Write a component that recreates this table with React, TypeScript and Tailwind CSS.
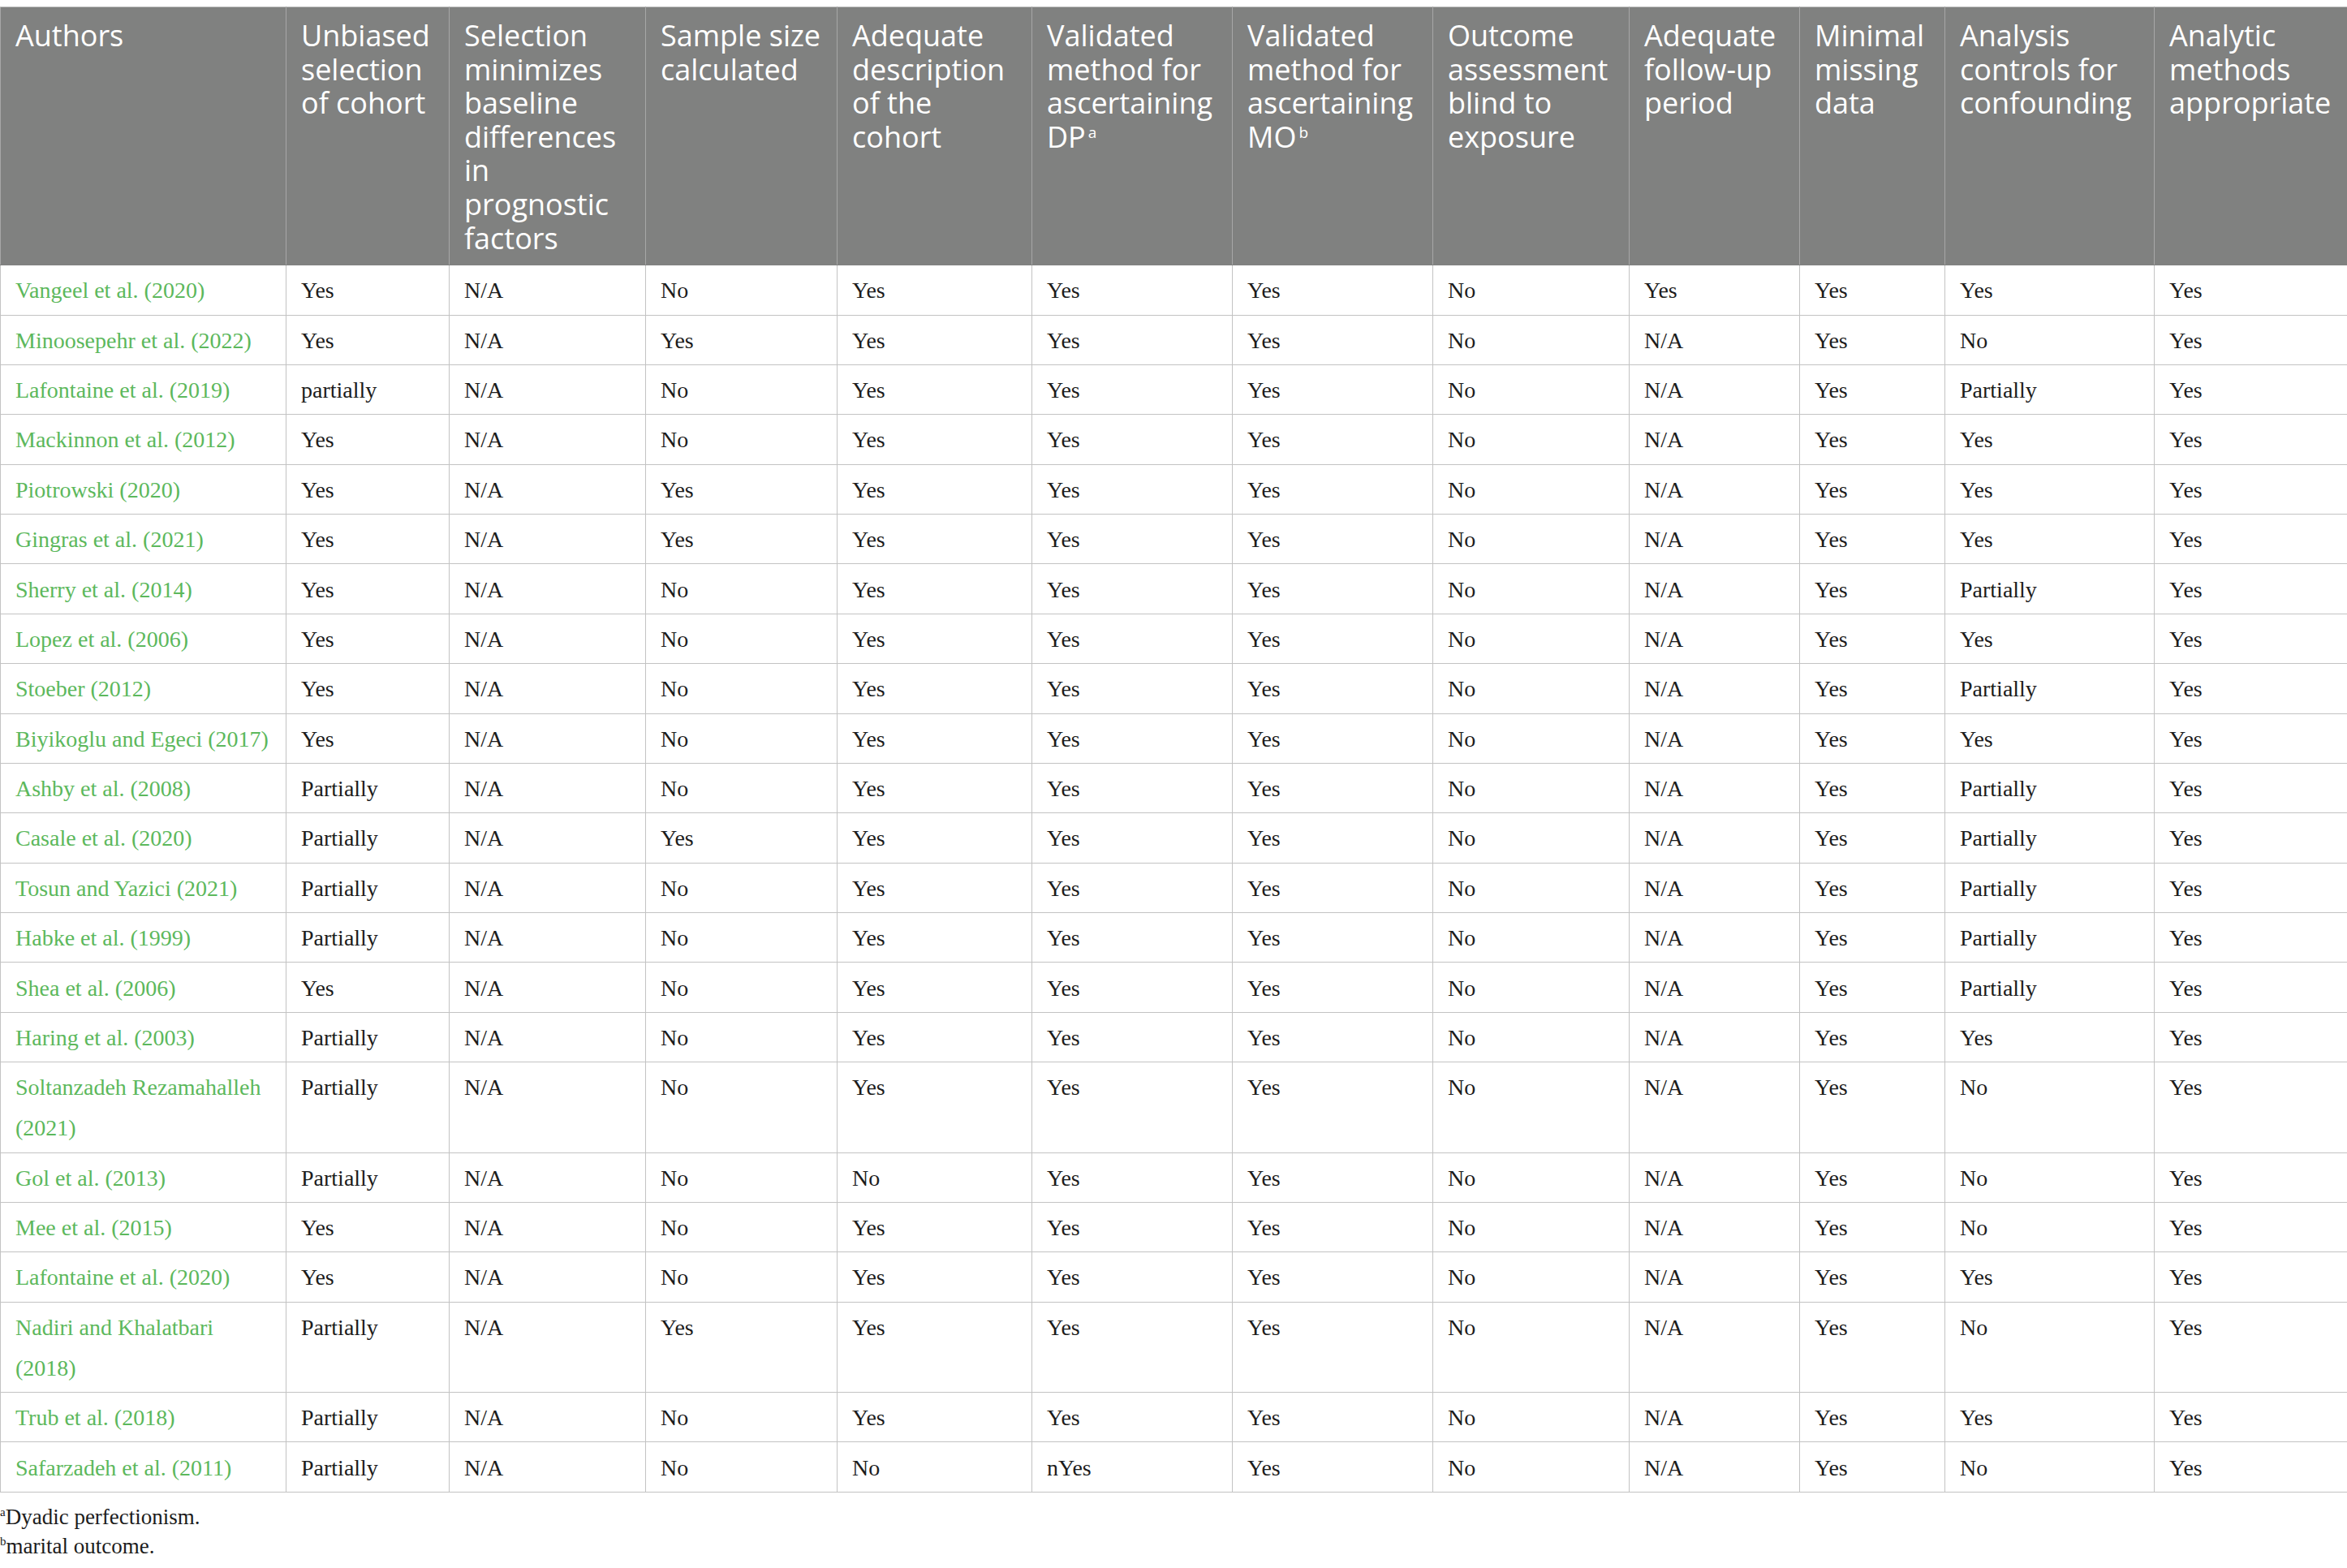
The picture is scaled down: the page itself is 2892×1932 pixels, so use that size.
import React from 'react';

type Row = { author: React.ReactNode; cells: string[] };

const headers: React.ReactNode[] = [
    'Authors',
    'Unbiased selection of cohort',
    'Selection minimizes baseline differences in prognostic factors',
    'Sample size calculated',
    'Adequate description of the cohort',
    <>Validated method for ascertaining DP<span className="ml-[3px] text-[19px] align-[12px] leading-none">a</span></>,
    <>Validated method for ascertaining MO<span className="ml-[3px] text-[19px] align-[12px] leading-none">b</span></>,
    'Outcome assessment blind to exposure',
    'Adequate follow-up period',
    'Minimal missing data',
    'Analysis controls for confounding',
    'Analytic methods appropriate',
];

const widths = [352, 201, 242, 236, 240, 247, 247, 242, 210, 179, 258, 238];

const rows: Row[] = [
    { author: 'Vangeel et al. (2020)', cells: ['Yes', 'N/A', 'No', 'Yes', 'Yes', 'Yes', 'No', 'Yes', 'Yes', 'Yes', 'Yes'] },
    { author: 'Minoosepehr et al. (2022)', cells: ['Yes', 'N/A', 'Yes', 'Yes', 'Yes', 'Yes', 'No', 'N/A', 'Yes', 'No', 'Yes'] },
    { author: 'Lafontaine et al. (2019)', cells: ['partially', 'N/A', 'No', 'Yes', 'Yes', 'Yes', 'No', 'N/A', 'Yes', 'Partially', 'Yes'] },
    { author: 'Mackinnon et al. (2012)', cells: ['Yes', 'N/A', 'No', 'Yes', 'Yes', 'Yes', 'No', 'N/A', 'Yes', 'Yes', 'Yes'] },
    { author: 'Piotrowski (2020)', cells: ['Yes', 'N/A', 'Yes', 'Yes', 'Yes', 'Yes', 'No', 'N/A', 'Yes', 'Yes', 'Yes'] },
    { author: 'Gingras et al. (2021)', cells: ['Yes', 'N/A', 'Yes', 'Yes', 'Yes', 'Yes', 'No', 'N/A', 'Yes', 'Yes', 'Yes'] },
    { author: 'Sherry et al. (2014)', cells: ['Yes', 'N/A', 'No', 'Yes', 'Yes', 'Yes', 'No', 'N/A', 'Yes', 'Partially', 'Yes'] },
    { author: 'Lopez et al. (2006)', cells: ['Yes', 'N/A', 'No', 'Yes', 'Yes', 'Yes', 'No', 'N/A', 'Yes', 'Yes', 'Yes'] },
    { author: 'Stoeber (2012)', cells: ['Yes', 'N/A', 'No', 'Yes', 'Yes', 'Yes', 'No', 'N/A', 'Yes', 'Partially', 'Yes'] },
    { author: 'Biyikoglu and Egeci (2017)', cells: ['Yes', 'N/A', 'No', 'Yes', 'Yes', 'Yes', 'No', 'N/A', 'Yes', 'Yes', 'Yes'] },
    { author: 'Ashby et al. (2008)', cells: ['Partially', 'N/A', 'No', 'Yes', 'Yes', 'Yes', 'No', 'N/A', 'Yes', 'Partially', 'Yes'] },
    { author: 'Casale et al. (2020)', cells: ['Partially', 'N/A', 'Yes', 'Yes', 'Yes', 'Yes', 'No', 'N/A', 'Yes', 'Partially', 'Yes'] },
    { author: 'Tosun and Yazici (2021)', cells: ['Partially', 'N/A', 'No', 'Yes', 'Yes', 'Yes', 'No', 'N/A', 'Yes', 'Partially', 'Yes'] },
    { author: 'Habke et al. (1999)', cells: ['Partially', 'N/A', 'No', 'Yes', 'Yes', 'Yes', 'No', 'N/A', 'Yes', 'Partially', 'Yes'] },
    { author: 'Shea et al. (2006)', cells: ['Yes', 'N/A', 'No', 'Yes', 'Yes', 'Yes', 'No', 'N/A', 'Yes', 'Partially', 'Yes'] },
    { author: 'Haring et al. (2003)', cells: ['Partially', 'N/A', 'No', 'Yes', 'Yes', 'Yes', 'No', 'N/A', 'Yes', 'Yes', 'Yes'] },
    { author: <>Soltanzadeh Rezamahalleh<br />(2021)</>, cells: ['Partially', 'N/A', 'No', 'Yes', 'Yes', 'Yes', 'No', 'N/A', 'Yes', 'No', 'Yes'] },
    { author: 'Gol et al. (2013)', cells: ['Partially', 'N/A', 'No', 'No', 'Yes', 'Yes', 'No', 'N/A', 'Yes', 'No', 'Yes'] },
    { author: 'Mee et al. (2015)', cells: ['Yes', 'N/A', 'No', 'Yes', 'Yes', 'Yes', 'No', 'N/A', 'Yes', 'No', 'Yes'] },
    { author: 'Lafontaine et al. (2020)', cells: ['Yes', 'N/A', 'No', 'Yes', 'Yes', 'Yes', 'No', 'N/A', 'Yes', 'Yes', 'Yes'] },
    { author: <>Nadiri and Khalatbari<br />(2018)</>, cells: ['Partially', 'N/A', 'Yes', 'Yes', 'Yes', 'Yes', 'No', 'N/A', 'Yes', 'No', 'Yes'] },
    { author: 'Trub et al. (2018)', cells: ['Partially', 'N/A', 'No', 'Yes', 'Yes', 'Yes', 'No', 'N/A', 'Yes', 'Yes', 'Yes'] },
    { author: 'Safarzadeh et al. (2011)', cells: ['Partially', 'N/A', 'No', 'No', 'nYes', 'Yes', 'No', 'N/A', 'Yes', 'No', 'Yes'] },
];

export default function App() {
    return (
        <div className="w-[2892px] h-[1932px] bg-white pt-[8px] overflow-hidden">
            <table className="w-[2892px] table-fixed border-collapse">
                <colgroup>
                    {widths.map((w, i) => (
                        <col key={i} style={{ width: w }} />
                    ))}
                </colgroup>
                <thead>
                    <tr className="bg-[#808180]">
                        {headers.map((h, i) => (
                            <th
                                key={i}
                                className="border border-[#a7a7a7] border-t-[#c2c2c2] border-b-[#808180] pl-[18px] pr-[8px] pt-[14px] pb-[12px] text-left align-top font-normal text-white text-[36px] leading-[41.6px] font-['Open_Sans',sans-serif]"
                            >
                                {h}
                            </th>
                        ))}
                    </tr>
                </thead>
                <tbody className="font-['Liberation_Serif',serif] text-[28px] leading-[50px] text-[#1c1c1c]">
                    {rows.map((r, i) => (
                        <tr key={i}>
                            <td className="border border-[#c3c3c3] pl-[18px] pr-[8px] pt-[6.2px] pb-[4.2px] align-top text-[#5cb85c]">
                                {r.author}
                            </td>
                            {r.cells.map((c, j) => (
                                <td key={j} className="border border-[#c3c3c3] pl-[18px] pr-[8px] pt-[6.2px] pb-[4.2px] align-top">
                                    {c}
                                </td>
                            ))}
                        </tr>
                    ))}
                </tbody>
            </table>

            <div className="mt-[12px] font-['Liberation_Serif',serif] text-[27px] leading-[36px] text-[#1c1c1c]">
                <p><span className="text-[15px] align-[10px] leading-none">a</span>Dyadic perfectionism.</p>
                <p><span className="text-[15px] align-[10px] leading-none">b</span>marital outcome.</p>
            </div>
        </div>
    );
}
